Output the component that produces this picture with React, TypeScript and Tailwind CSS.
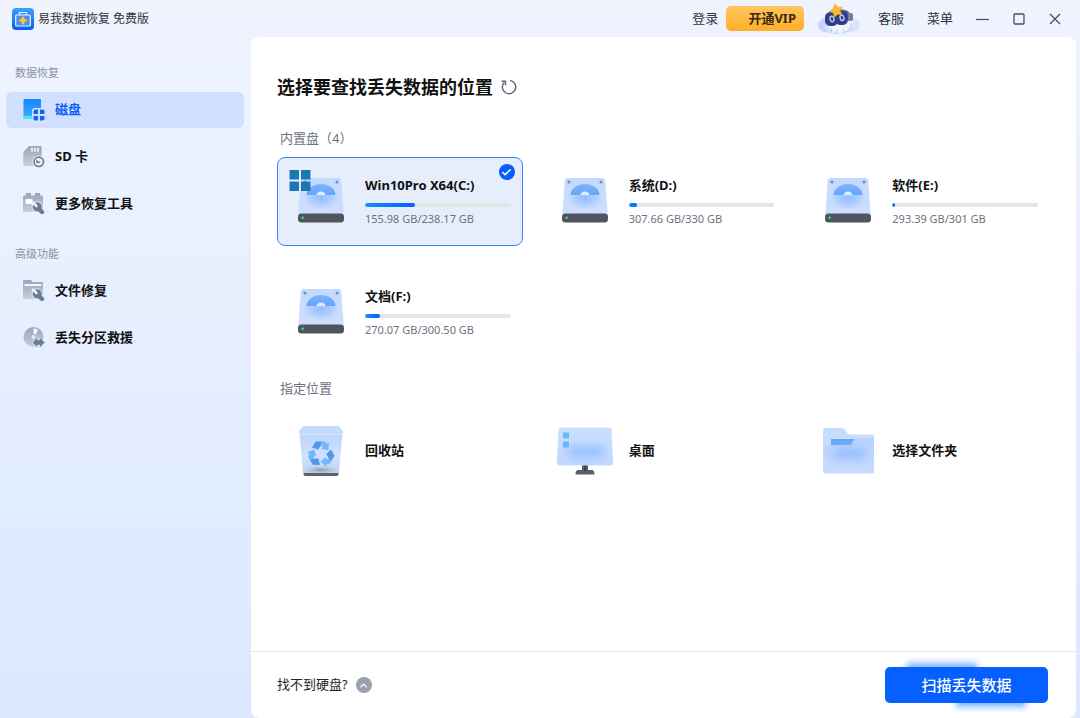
import React, { useState } from 'react';
import { Check, ChevronUp } from 'lucide-react';

type Disk = {
  name: string;
  size: string;
  used: number;
  system?: boolean;
};

const disks: Disk[] = [
  { name: 'Win10Pro X64(C:)', size: '155.98 GB/238.17 GB', used: 34, system: true },
  { name: '系统(D:)', size: '307.66 GB/330 GB', used: 6 },
  { name: '软件(E:)', size: '293.39 GB/301 GB', used: 2 },
  { name: '文档(F:)', size: '270.07 GB/300.50 GB', used: 10 },
];

const LogoIcon = () => (
  <svg width="22" height="22" viewBox="0 0 22 22">
    <defs>
      <linearGradient id="logo" x1="0" y1="0" x2="0" y2="1">
        <stop offset="0" stopColor="#3da2fb" />
        <stop offset="1" stopColor="#0a5cf5" />
      </linearGradient>
    </defs>
    <rect width="22" height="22" rx="4" fill="url(#logo)" />
    <path d="M7.5 7V4.5h7V7" fill="none" stroke="#e8f3ff" strokeWidth="1.2" />
    <rect x="3.7" y="7" width="14.6" height="11" rx="1" fill="#4a90ea" stroke="#e8f3ff" strokeWidth="1.2" />
    <path d="M11 8.8v7.4M7.3 12.5h7.4" stroke="#ffc834" strokeWidth="2.6" />
  </svg>
);

const AvatarIcon = () => (
  <svg width="42" height="32" viewBox="0 0 42 32">
    <ellipse cx="9" cy="22" rx="9" ry="7.5" fill="#c3d5fd" />
    <ellipse cx="34" cy="22" rx="8" ry="7" fill="#dfe2fd" />
    <ellipse cx="21" cy="24" rx="14" ry="7" fill="#d5e1fd" />
    <ellipse cx="22" cy="17" rx="13" ry="13" fill="#f2f6ff" />
    <path d="M14 25l-1 5M19 26v5M25 26l1 4M33 20c0 5-2 8-6 9" fill="none" stroke="#b9c5e0" />
    <path d="M9 12c2-6 17-8 22-3l1 4H8z" fill="#5267a8" />
    <rect x="29" y="10" width="6" height="8" rx="2" fill="#71809d" />
    <rect x="7" y="9" width="13" height="14" rx="5.5" fill="#303f86" />
    <rect x="17" y="8" width="13" height="14" rx="5.5" fill="#303f86" />
    <ellipse cx="14" cy="16" rx="1.9" ry="2.8" fill="#303f86" stroke="#b8c5f4" strokeWidth="1.4" transform="rotate(-14 14 16)" />
    <ellipse cx="24" cy="14.8" rx="1.9" ry="2.8" fill="#303f86" stroke="#b8c5f4" strokeWidth="1.4" transform="rotate(-14 24 14.8)" />
    <path d="M17 .8l2.5 3.4 4.5-.1-1.9 3.7 1.9 3.9-4.3-.5-3.3 3-1.1-4.2-4.2-1.7 3.8-2.3z" fill="#fbb936" stroke="#f5a51f" strokeWidth=".6" strokeLinejoin="round" />
  </svg>
);

const GreyGradient = ({ id }: { id: string }) => (
  <defs>
    <linearGradient id={id} x1="0" y1="0" x2="0" y2="1">
      <stop offset="0" stopColor="#98a6b7" />
      <stop offset="1" stopColor="#c6cfdc" />
    </linearGradient>
  </defs>
);

const Wrench = () => (
  <g strokeLinecap="round">
    <circle cx="14" cy="13.6" r="5.4" fill="#e9f1ff" />
    <path d="M14.5 14.5l4.500 4.500" stroke="#e9f1ff" strokeWidth="6" />
    <circle cx="14.200" cy="13.800" r="4.600" fill="#6b7c92" />
    <path d="M15 15l4 4" stroke="#6b7c92" strokeWidth="4.400" />
    <path d="M10 9.600l3.400 3.400" stroke="#e9f1ff" strokeWidth="2.600" />
  </g>
);

const DiskNavIcon = () => (
  <svg width="22" height="22" viewBox="0 0 22 22">
    <defs>
      <linearGradient id="nav-disk" x1="0" y1="0" x2="0" y2="1">
        <stop offset="0" stopColor="#1683fb" />
        <stop offset="1" stopColor="#43b0ff" />
      </linearGradient>
    </defs>
    <rect x=".5" width="17.500" height="20" rx="1" fill="url(#nav-disk)" />
    <path d="M.5 17h9v3h-8a1 1 0 0 1-1-1z" fill="#3df0dc" />
    <rect x="9" y="9" width="13" height="13" rx="3" fill="#d1e0ff" />
    <path d="M12.500 10.500H15V15h-4.500v-2.500a2 2 0 0 1 2-2z" fill="#1265f5" />
    <path d="M17 10.500h2.500a2 2 0 0 1 2 2V15H17z" fill="#1265f5" />
    <path d="M10.500 17H15v4.500h-2.500a2 2 0 0 1-2-2z" fill="#1265f5" />
    <path d="M17 17h4.500v2.500a2 2 0 0 1-2 2H17z" fill="#1265f5" />
  </svg>
);

const SdNavIcon = () => (
  <svg width="22" height="22" viewBox="0 0 22 22">
    <GreyGradient id="nav-sd" />
    <path d="M6 0h11c1 0 1.700.7 1.700 1.700V20H2c-1 0-1.700-.7-1.700-1.700V6z" fill="url(#nav-sd)" />
    <path d="M9 1.800v4M12 1.800v4M15 1.800v4" stroke="#eef4ff" strokeWidth="1.800" />
    <circle cx="15.800" cy="15.800" r="6.400" fill="#e9f1ff" />
    <circle cx="15.800" cy="15.800" r="4.700" fill="none" stroke="#6b7c92" strokeWidth="1.700" />
    <path d="M14 14.200v2h3.200" fill="none" stroke="#6b7c92" strokeWidth="1.500" />
  </svg>
);

const ToolsNavIcon = () => (
  <svg width="22" height="22" viewBox="0 0 22 22">
    <GreyGradient id="nav-tools" />
    <path d="M3 2.500V0h5v2.500h4V0h5v2.500h1.500c.8 0 1.500.7 1.500 1.500v13.500c0 .8-.7 1.500-1.500 1.500h-17C.7 19 0 18.300 0 17.500V4c0-.8.7-1.500 1.500-1.500z" fill="url(#nav-tools)" />
    <rect x="2.500" y="6" width="7" height="5" rx="1" fill="#fff" />
    <Wrench />
  </svg>
);

const RepairNavIcon = () => (
  <svg width="22" height="22" viewBox="0 0 22 22">
    <GreyGradient id="nav-repair" />
    <path d="M1 0h7l1.500 2H19c.6 0 1 .4 1 1v15c0 .6-.4 1-1 1H1c-.6 0-1-.4-1-1V1c0-.6.4-1 1-1z" fill="url(#nav-repair)" />
    <path d="M1.500 5h17" stroke="#eef4ff" strokeWidth="2" />
    <Wrench />
  </svg>
);

const PartitionNavIcon = () => (
  <svg width="22" height="22" viewBox="0 0 22 22">
    <GreyGradient id="nav-partition" />
    <circle cx="10.500" cy="10" r="10" fill="url(#nav-partition)" />
    <path d="M10.500 1.500v5l2.500 1 2-5a10 10 0 0 0-4.500-1z" fill="#f4f8ff" />
    <circle cx="10.500" cy="10" r="2" fill="#e0e8f4" />
    <path d="M9.500 15.500l5-5.500v3h2v-3l5.500 5.500-5.500 5.500v-3h-2v3z" fill="#6b7c92" stroke="#e9f1ff" strokeWidth=".6" />
  </svg>
);

const DiskIcon = () => (
  <svg width="46" height="45" viewBox="0 0 46 45">
    <defs>
      <linearGradient id="disk-body" x1="0" y1="0" x2="0" y2="1">
        <stop offset="0" stopColor="#c2d9ff" />
        <stop offset="1" stopColor="#d0dfff" />
      </linearGradient>
      <linearGradient id="disk-plate" x1="0" y1="0" x2="0" y2="1">
        <stop offset="0" stopColor="#7fb4fd" />
        <stop offset="1" stopColor="#62a5fb" />
      </linearGradient>
      <radialGradient id="disk-glow">
        <stop offset="0" stopColor="#8fbcff" />
        <stop offset="1" stopColor="#8fbcff" stopOpacity="0" />
      </radialGradient>
    </defs>
    <path d="M5.500 0h35c1.500 0 2.400 1 2.600 2.400L46 39H0L2.900 2.400C3.100 1 4 0 5.500 0z" fill="url(#disk-body)" />
    <ellipse cx="23" cy="20" rx="18" ry="12" fill="url(#disk-glow)" />
    <path d="M8.500 17C9 10 15.200 6 23 6s14 4 14.500 11z" fill="url(#disk-plate)" />
    <path d="M18.500 17c0-2 2-3.600 4.500-3.600s4.500 1.600 4.500 3.600z" fill="#dce9ff" />
    <circle cx="7" cy="4" r="1.500" fill="#6b8ec2" />
    <circle cx="39" cy="4" r="1.500" fill="#6b8ec2" />
    <rect y="35.500" width="46" height="9" rx="3.500" fill="#4f545f" />
    <circle cx="4.700" cy="39.800" r="1.300" fill="#1fe08c" />
  </svg>
);

const WindowsBadge = () => (
  <svg className="absolute -left-1 -top-2" width="22" height="21" viewBox="0 0 22 21">
    <path d="M.5 0h9.500v9.500H.5zM12 0h9.500v9.500H12zM.5 11.500H10V21H.5zM12 11.500h9.500V21H12z" fill="#1b78b4" />
  </svg>
);

const RecycleIcon = () => (
  <svg width="44" height="50" viewBox="0 0 44 50">
    <defs>
      <linearGradient id="bin-body" x1="0" y1="0" x2="0" y2="1">
        <stop offset="0" stopColor="#bcd4ff" />
        <stop offset=".6" stopColor="#d2e1ff" />
        <stop offset="1" stopColor="#c3d0ea" />
      </linearGradient>
      <radialGradient id="bin-shade">
        <stop offset="0" stopColor="#76829c" stopOpacity=".75" />
        <stop offset="1" stopColor="#9fb0d0" stopOpacity="0" />
      </radialGradient>
    </defs>
    <path d="M4.500 44h35v4c0 1-.8 2-2 2h-31c-1.200 0-2-1-2-2z" fill="#5b6270" />
    <path d="M.7 8h42.600L40 47H4z" fill="url(#bin-body)" />
    <ellipse cx="22" cy="44" rx="17" ry="4" fill="url(#bin-shade)" />
    <path d="M5.500 0h33c1 0 1.600.4 2.200 1.200L44 5.500 43.300 9H.7L0 5.500l3.300-4.300C3.900.4 4.500 0 5.500 0z" fill="#c2dcff" />
    <path d="M.7 8.500h42.600" stroke="#d6e6ff" />
    {[0, 120, 240].map((angle) => (
      <g key={angle} transform={`rotate(${angle} 22 28)`}>
        <path d="M16.800 15.500h7.200l-4.600 8-6.400-1.900z" fill="#5296e6" />
        <path d="M22.800 15.500h3.200l1.900 2.300 2.300-1-1 7.500-7-1.600 1.700-1.300-2.400-3.400z" fill="#6fb8fc" />
      </g>
    ))}
  </svg>
);

const DesktopIcon = () => (
  <svg width="56" height="48" viewBox="0 0 56 48">
    <defs>
      <linearGradient id="screen" x1="0" y1="0" x2="0" y2="1">
        <stop offset="0" stopColor="#cbdfff" />
        <stop offset="1" stopColor="#c0d7ff" />
      </linearGradient>
      <filter id="screen-blur" x="-30%" y="-60%" width="160%" height="220%">
        <feGaussianBlur stdDeviation="4" />
      </filter>
    </defs>
    <path d="M25 37h6v6h4c1.500 0 2.500 1.500 2.500 4.500h-19c0-3 1-4.500 2.500-4.500h4z" fill="#59606c" />
    <path d="M27 38h2v6h-2z" fill="#3a404a" />
    <path d="M4 .5h48c1.500 0 2.500 1 2.600 2.500L56 35.500c0 2-1 3-3 3H3c-2 0-3-1-3-3L1.400 3C1.500 1.500 2.500.5 4 .5z" fill="url(#screen)" />
    <rect x="11" y="19" width="36" height="11" rx="4" fill="#97c0ff" filter="url(#screen-blur)" />
    <path d="M6 5.500h6v6H6zM6 14.500h6v6H6z" fill="#68b8fc" />
  </svg>
);

const FolderIcon = () => (
  <svg width="51" height="46" viewBox="0 0 51 46">
    <defs>
      <linearGradient id="folder" x1="0" y1="0" x2="0" y2="1">
        <stop offset="0" stopColor="#b8d3ff" />
        <stop offset="1" stopColor="#c7dbff" />
      </linearGradient>
      <filter id="folder-blur" x="-40%" y="-60%" width="180%" height="220%">
        <feGaussianBlur stdDeviation="5" />
      </filter>
    </defs>
    <path d="M2 0h17c1.500 0 2.500.7 3.200 2L25 6.500h24c1 0 2 1 2 2V22H0V2C0 .9.900 0 2 0z" fill="#c5deff" />
    <path d="M8 11h24v6H8z" fill="#66a9f5" />
    <path d="M0 17h26.500c1 0 1.500-.4 2-1.200l2.500-4c.6-1 1.300-1.300 2.300-1.300H51v33c0 1.200-.9 2-2 2H2c-1.100 0-2-.8-2-2z" fill="url(#folder)" />
    <rect x="10" y="20" width="33" height="11" rx="4" fill="#97beff" filter="url(#folder-blur)" />
  </svg>
);

const RefreshIcon = () => (
  <svg width="16" height="16" viewBox="0 0 16 16" fill="none" stroke="#5b6472" strokeWidth="1.400">
    <path d="M9 1.400A6.700 6.700 0 1 1 3.200 3.400" />
    <path d="M.6 2.300h3.900v3.900" />
  </svg>
);

const navGroups = [
  {
    title: '数据恢复',
    items: [
      { label: '磁盘', icon: DiskNavIcon },
      { label: 'SD 卡', icon: SdNavIcon },
      { label: '更多恢复工具', icon: ToolsNavIcon },
    ],
  },
  {
    title: '高级功能',
    items: [
      { label: '文件修复', icon: RepairNavIcon },
      { label: '丢失分区救援', icon: PartitionNavIcon },
    ],
  },
];

const locations = [
  { label: '回收站', icon: RecycleIcon },
  { label: '桌面', icon: DesktopIcon },
  { label: '选择文件夹', icon: FolderIcon },
];

const Header = () => (
  <header className="flex h-[37px] items-center justify-between pl-3 pr-[19px] text-[13px] text-[#30343c]">
    <div className="flex items-center gap-1 text-xs">
      <LogoIcon />
      <span>易我数据恢复 免费版</span>
    </div>
    <div className="flex items-center">
      <button>登录</button>
      <button className="ml-2 h-[25px] rounded-[5px] bg-linear-to-b from-[#ffc65c] to-[#ffae25] pl-[22px] pr-2 font-bold text-[#3b2a16]">
        开通VIP
      </button>
      <button className="ml-[14px]" aria-label="account">
        <AvatarIcon />
      </button>
      <button className="ml-[18px]">客服</button>
      <button className="ml-[23px]">菜单</button>
      <div className="ml-[23px] flex items-center gap-6 text-[#4a4f59]">
        <button aria-label="minimize">
          <svg width="13" height="12" viewBox="0 0 13 12" stroke="currentColor" strokeWidth="1.2">
            <path d="M0 6.500h13" />
          </svg>
        </button>
        <button aria-label="maximize">
          <svg width="12" height="12" viewBox="0 0 12 12" fill="none" stroke="currentColor" strokeWidth="1.3">
            <rect x="1" y="1" width="10" height="10" rx="1" />
          </svg>
        </button>
        <button aria-label="close">
          <svg width="12" height="12" viewBox="0 0 12 12" stroke="currentColor" strokeWidth="1.3">
            <path d="M1 1l10 10M11 1L1 11" />
          </svg>
        </button>
      </div>
    </div>
  </header>
);

const Sidebar = () => {
  const [active, setActive] = useState('磁盘');

  return (
    <nav className="w-[251px] shrink-0 pl-1.5 pr-[7px] pt-7">
      {navGroups.map((group) => (
        <div key={group.title} className="mb-6">
          <h2 className="mb-[11px] pl-[9px] text-[11px] leading-4 text-[#8b919c]">{group.title}</h2>
          <ul className="flex flex-col gap-[11px]">
            {group.items.map(({ label, icon: Icon }) => (
              <li key={label}>
                <button
                  onClick={() => setActive(label)}
                  className={`flex h-9 w-full items-center gap-2.5 rounded-md px-[17px] text-[13px] font-bold ${
                    active === label ? 'bg-[#d1e0ff] text-[#0f5ff5]' : 'text-[#111]'
                  }`}
                >
                  <Icon />
                  {label}
                </button>
              </li>
            ))}
          </ul>
        </div>
      ))}
    </nav>
  );
};

const DiskCard: React.FC<{ disk: Disk; selected: boolean; onSelect: () => void }> = ({
  disk,
  selected,
  onSelect,
}) => (
  <button
    onClick={onSelect}
    aria-pressed={selected}
    className={`relative flex h-[89px] items-center gap-4 rounded-lg border pb-0.5 pl-[15px] pr-[11px] text-left ${
      selected ? 'border-[#3b82f6] bg-[#e6eefc]' : 'border-transparent'
    }`}
  >
    <span className="relative flex w-14 shrink-0 justify-center">
      <DiskIcon />
      {disk.system && <WindowsBadge />}
    </span>
    <span className="flex min-w-0 grow flex-col">
      <span className="text-[13px] font-bold leading-5 text-[#111]">{disk.name}</span>
      <span className="mt-2 block h-1 overflow-hidden rounded-full bg-[#e4e5e8]">
        <span
          className="block h-full rounded-full bg-linear-to-r from-[#1b8dff] to-[#0a5cff]"
          style={{ width: `${disk.used}%` }}
        />
      </span>
      <span className="mt-1 text-[11px] leading-4 text-[#6b7280]">{disk.size}</span>
    </span>
    {selected && (
      <span className="absolute right-[7px] top-1.5 flex size-4 items-center justify-center rounded-full bg-[#0a5cff] text-white">
        <Check size={11} strokeWidth={3.5} />
      </span>
    )}
  </button>
);

const App: React.FC = () => {
  const [selected, setSelected] = useState('Win10Pro X64(C:)');

  return (
    <div className="flex min-h-screen flex-col bg-linear-to-b from-[#eff4ff] to-[#dce8ff] font-['Noto_Sans','Noto_Sans_CJK_SC',sans-serif]">
      <Header />
      <div className="flex grow">
        <Sidebar />
        <main className="mr-1 flex grow flex-col rounded-lg bg-white">
          <div className="grow px-[26px] pt-9">
            <div className="flex items-center gap-2">
              <h1 className="text-lg font-bold leading-7 text-[#111]">选择要查找丢失数据的位置</h1>
              <button aria-label="refresh">
                <RefreshIcon />
              </button>
            </div>

            <h2 className="mt-[27px] pl-[3px] text-[13px] leading-5 text-[#6b7280]">内置盘（4）</h2>
            <div className="mt-[9px] grid grid-cols-3 gap-x-[18px] gap-y-[22px]">
              {disks.map((disk) => (
                <DiskCard
                  key={disk.name}
                  disk={disk}
                  selected={selected === disk.name}
                  onSelect={() => setSelected(disk.name)}
                />
              ))}
            </div>

            <h2 className="mt-[21px] pl-[3px] text-[13px] leading-5 text-[#6b7280]">指定位置</h2>
            <div className="mt-2 grid grid-cols-3 gap-x-[18px]">
              {locations.map(({ label, icon: Icon }) => (
                <button
                  key={label}
                  className="flex h-[89px] items-center gap-4 rounded-lg border border-transparent pl-[15px] text-[13px] font-bold text-[#111]"
                >
                  <span className="flex w-14 justify-center">
                    <Icon />
                  </span>
                  {label}
                </button>
              ))}
            </div>
          </div>

          <footer className="flex h-[67px] items-center justify-between border-t border-[#e5e7eb] pl-[26px] pr-7">
            <button className="flex items-center gap-2 text-[13px] text-[#1f2329]">
              找不到硬盘?
              <span className="flex size-4 items-center justify-center rounded-full bg-[#9aa1af] text-white">
                <ChevronUp size={11} strokeWidth={3} />
              </span>
            </button>
            <div className="relative">
              <span className="absolute -top-1 left-[22px] h-4 w-[70px] bg-[#7db5ff] blur-[3px]" />
              <span className="absolute -bottom-1 right-[22px] h-4 w-[70px] bg-[#7db5ff] blur-[3px]" />
              <button className="relative h-9 w-[163px] rounded-[5px] bg-[#0560ff] text-[15px] font-medium text-white">
                扫描丢失数据
              </button>
            </div>
          </footer>
        </main>
      </div>
    </div>
  );
};

export default App;
